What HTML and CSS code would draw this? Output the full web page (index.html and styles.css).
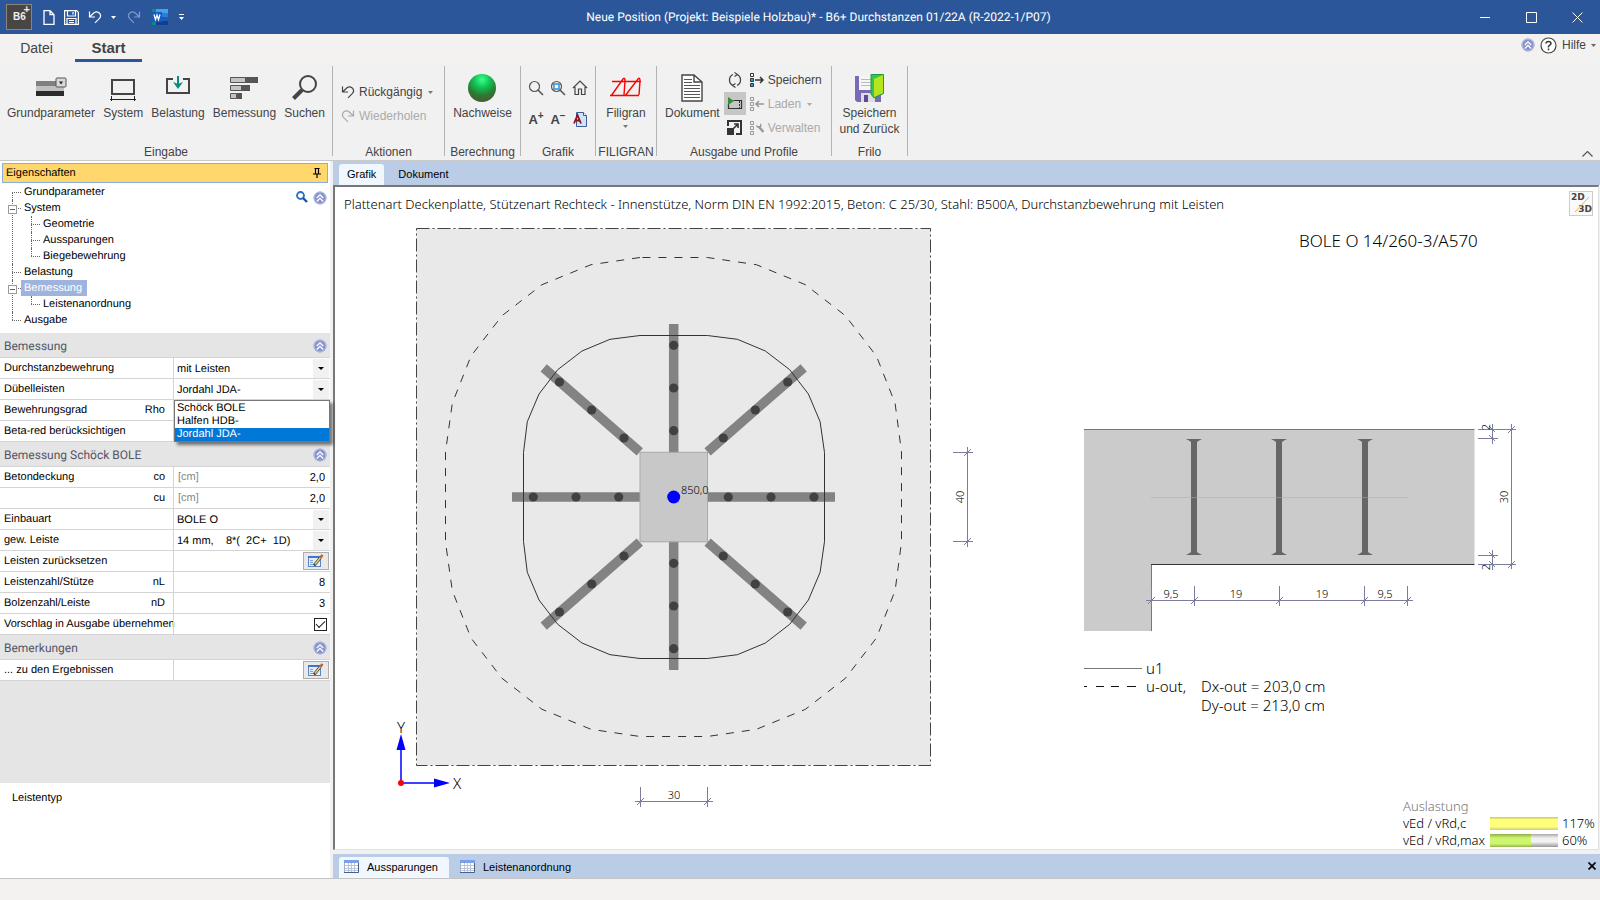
FILE: index.html
```html
<!DOCTYPE html>
<html lang="de">
<head>
<meta charset="utf-8">
<title>Neue Position (Projekt: Beispiele Holzbau)* - B6+ Durchstanzen</title>
<link rel="stylesheet" href="styles.css">
</head>
<body>
<svg class="defs" width="0" height="0" aria-hidden="true">
  <defs>
    <radialGradient id="gBall" cx="50%" cy="20%" r="80%">
      <stop offset="0" stop-color="#3dff8e"/><stop offset=".35" stop-color="#12c455"/><stop offset=".7" stop-color="#2c7a33"/><stop offset="1" stop-color="#4c5a30"/>
    </radialGradient>
    <symbol id="undo" viewBox="0 0 14 14"><path d="M1.500 1.500v5.500h5.500M1.500 7L6 2.800q2.500-1.800 5 0 3 2.700.5 5.500L7 12.800" fill="none" stroke="currentColor" stroke-width="1.200"/></symbol>
    <symbol id="redo" viewBox="0 0 14 14"><path d="M12.500 1.500v5.500H7M12.500 7L8 2.800q-2.500-1.800-5 0-3 2.700-.5 5.500L7 12.800" fill="none" stroke="currentColor" stroke-width="1.200"/></symbol>
    <symbol id="fold" viewBox="0 0 14 14"><circle cx="7" cy="7" r="6.500" fill="#8a93cc"/><circle cx="7" cy="7" r="6" fill="none" stroke="#b3c4e6"/><path d="M3.800 7L7 3.800 10.200 7M3.800 10.500L7 7.300l3.200 3.200" fill="none" stroke="#fff" stroke-width="1.300"/></symbol>
    <symbol id="edit" viewBox="0 0 16 14"><rect x=".5" y="2.500" width="12" height="10" fill="#e4eefb" stroke="#5b86c9"/><rect x="0" y="2" width="13" height="2" fill="#3f74cf"/><path d="M2 6.500h3M2 8.500h3M2 10.500h3" stroke="#7f9fd0"/><path d="M6 11.500L12.500 3.500" stroke="#4a4636" stroke-width="2.800"/><path d="M7 10.300L12.500 3.500" stroke="#e6cf7d" stroke-width="1.400"/><path d="M12.500 3.500L14.500 1" stroke="#b2603a" stroke-width="2.500"/></symbol>
    <symbol id="sheet" viewBox="0 0 15 13"><rect x=".5" y=".5" width="14" height="12" fill="#fff" stroke="#9fb1cd"/><rect x="0" y="0" width="15" height="3" fill="#7ba0e8"/><path d="M1 5.500h13M1 8.500h13M1 10.500h13M4.500 3v10M7.500 3v10M10.500 3v10" stroke="#b9c6da"/><path d="M14.500 3v9.500H0" stroke="#4a5f88" fill="none"/></symbol>
  </defs>
</svg>

<header class="titlebar">
  <div class="quick">
    <span class="logo">B6<sup>+</sup></span>
    <button class="qbtn" aria-label="Neu"><svg width="12" height="15" viewBox="0 0 12 15"><path d="M1 .7h6l4 4v9.600H1zM7 .7v4h4" fill="none" stroke="#fff" stroke-width="1.300"/></svg></button>
    <button class="qbtn" aria-label="Speichern"><svg width="15" height="15" viewBox="0 0 15 15"><path d="M.6.6h12l1.800 1.800v12H.6zM3.500 1v5h8V1M3 14V8.500h9V14M9 2v2.500M5 10.500h5M5 12.500h5" fill="none" stroke="#fff" stroke-width="1.200"/></svg></button>
    <button class="qbtn" aria-label="Rückgängig"><svg width="14" height="14"><use href="#undo"/></svg></button>
    <button class="qbtn" aria-label="Liste"><svg width="5" height="3"><path d="M0 0h5L2.500 3z" fill="#fff"/></svg></button>
    <button class="qbtn dim-icon" aria-label="Wiederholen"><svg width="14" height="14"><use href="#redo"/></svg></button>
    <button class="qbtn" aria-label="Word"><svg width="16" height="16" viewBox="0 0 16 16"><rect x="4" y="0" width="12" height="4" fill="#41a5ee"/><rect x="4" y="4" width="12" height="4" fill="#2b7cd3"/><rect x="4" y="8" width="12" height="4" fill="#185abd"/><rect x="4" y="12" width="12" height="4" fill="#103f91"/><path d="M0 0h4v4H0zM0 12h4v4H0z" fill="#0b8a82"/><rect x="0" y="3" width="10" height="10" fill="#185abd"/><path d="M2 5.500l1.500 5L5 6l1.500 4.500 1.500-5" fill="none" stroke="#fff" stroke-width="1.300"/></svg></button>
    <button class="qbtn" aria-label="Anpassen"><svg width="5" height="7"><path d="M0 .5h5" stroke="#fff"/><path d="M0 3h5L2.500 6z" fill="#fff"/></svg></button>
  </div>
  <h1 class="title">Neue Position (Projekt: Beispiele Holzbau)* - B6+ Durchstanzen 01/22A (R-2022-1/P07)</h1>
  <div class="window-buttons">
    <button aria-label="Minimieren"><svg width="11" height="11"><path d="M0 5.500h10" stroke="#fff"/></svg></button>
    <button aria-label="Maximieren"><svg width="11" height="11"><path d="M.5.5h10v10H.5z" fill="none" stroke="#fff"/></svg></button>
    <button aria-label="Schließen"><svg width="11" height="11"><path d="M.5.5l10 10M10.500.5l-10 10" stroke="#fff"/></svg></button>
  </div>
</header>

<nav class="menu">
  <a href="#" class="menu-tab">Datei</a>
  <a href="#" class="menu-tab current">Start</a>
  <div class="help">
    <svg width="14" height="14"><use href="#fold"/></svg>
    <svg width="17" height="17"><circle cx="8.500" cy="8.500" r="7.500" fill="#fff" stroke="#444" stroke-width="1.200"/><path d="M6 6.500Q6.200 4.500 8.500 4.500T11 6.500Q11 7.500 9.500 8.400T8.500 10.500M8.500 11.500v1.700" fill="none" stroke="#333" stroke-width="1.500"/></svg>
    <button class="plain">Hilfe</button>
    <svg width="5" height="3"><path d="M0 0h5L2.500 3z" fill="#666"/></svg>
  </div>
</nav>

<section class="ribbon">
  <div class="group g-input">
    <div class="tools">
      <button class="tool"><svg width="31" height="28" viewBox="0 0 31 28"><rect y="7" width="28" height="5" fill="#808080"/><rect y="12" width="28" height="5" fill="#c0c0c0"/><rect y="17" width="28" height="5" fill="#2b2b2b"/><rect x="20" y="4" width="10" height="9" rx="1" fill="#d8d8d8" stroke="#555"/><path d="M23 7.500h4l-2 3z" fill="#222"/></svg>Grundparameter</button>
      <button class="tool"><svg width="26" height="28" viewBox="0 0 26 28"><rect x="2" y="6" width="22" height="14" fill="none" stroke="#444" stroke-width="2"/><path d="M0 25.500h26M1.500 22v5M24.500 22v5" stroke="#222"/></svg>System</button>
      <button class="tool"><svg width="26" height="28" viewBox="0 0 26 28"><path d="M8 5H2v14h22V5h-6" fill="none" stroke="#444" stroke-width="2"/><path d="M13 2v10" stroke="#0b8a82" stroke-width="2"/><path d="M8 8l5 2 5-2-5 7z" fill="#0b8a82"/></svg>Belastung</button>
      <button class="tool"><svg width="29" height="28" viewBox="0 0 29 28"><path d="M15 3h13v6H15zM11 11h9v6h-9zM7 19h5v6H7z" fill="#555"/><path d="M.5 3.500h15v5h-15zM.5 11.500h11v5h-11zM.5 19.500h6v5h-6z" fill="#c4c4c4" stroke="#555"/></svg>Bemessung</button>
      <button class="tool"><svg width="28" height="28" viewBox="0 0 28 28"><circle cx="17" cy="10" r="8" fill="none" stroke="#444" stroke-width="2"/><path d="M11 16L2.500 24.500" stroke="#444" stroke-width="4"/></svg>Suchen</button>
    </div>
    <h2>Eingabe</h2>
  </div>
  <div class="group g-actions">
    <div class="rows">
      <button class="row-tool"><svg width="14" height="14"><use href="#undo"/></svg>Rückgängig<svg class="caret" width="5" height="3"><path d="M0 0h5L2.500 3z" fill="#777"/></svg></button>
      <button class="row-tool off" disabled><svg width="14" height="14"><use href="#redo"/></svg>Wiederholen</button>
    </div>
    <h2>Aktionen</h2>
  </div>
  <div class="group g-calc">
    <div class="tools single">
      <button class="tool"><svg width="28" height="28"><circle cx="14" cy="14" r="14" fill="url(#gBall)"/></svg>Nachweise</button>
    </div>
    <h2>Berechnung</h2>
  </div>
  <div class="group g-graphic">
    <div class="icon-grid">
      <button aria-label="Zoom"><svg width="16" height="16"><circle cx="6.500" cy="6.500" r="5" fill="none" stroke="#555" stroke-width="1.200"/><path d="M10 10l5 5" stroke="#555" stroke-width="1.600"/></svg></button>
      <button aria-label="Zoom Fenster"><svg width="16" height="16"><circle cx="6.500" cy="6.500" r="5" fill="none" stroke="#555" stroke-width="1.200"/><rect x="4" y="4" width="5" height="5" fill="#fff" stroke="#2f8fd6" stroke-width="1.500"/><path d="M10 10l5 5" stroke="#555" stroke-width="1.600"/></svg></button>
      <button aria-label="Alles zeigen"><svg width="16" height="16"><path d="M1 8l7-7 7 7M3 7v7.500h3.500V9h3v5.500H13V7" fill="none" stroke="#444" stroke-width="1.200"/></svg></button>
      <button class="glyph">A<sup>+</sup></button>
      <button class="glyph">A<sup>−</sup></button>
      <button class="glyph" aria-label="Schrift"><svg width="15" height="16"><path d="M3.500.5h7l3 3v11h-10z" fill="#d3e2f7" stroke="#3d5e96"/><path d="M10.500.5v3h3" fill="#fff" stroke="#3d5e96"/><path d="M1 11.500L4.500 3 8 11.500M2.500 8.500h4" fill="none" stroke="#8d1420" stroke-width="1.800"/></svg></button>
    </div>
    <h2>Grafik</h2>
  </div>
  <div class="group g-filigran">
    <div class="tools single">
      <button class="tool"><svg width="34" height="28" viewBox="0 0 34 28"><path d="M3 7.500h29M1 21.500h29M2 22L14 5q2-2 2 2l-1 14M16 22L29 5q2-2 2 2l-1 14" fill="none" stroke="#f00" stroke-width="1.400"/></svg>Filigran<svg class="below" width="5" height="3"><path d="M0 0h5L2.500 3z" fill="#777"/></svg></button>
    </div>
    <h2>FILIGRAN</h2>
  </div>
  <div class="group g-output">
    <div class="output">
      <button class="tool"><svg width="22" height="28" viewBox="0 0 22 28"><path d="M1 1h12l8 7v19H1z" fill="#fff" stroke="#444" stroke-width="1.400"/><path d="M13 1v7h8" fill="none" stroke="#444" stroke-width="1.400"/><path d="M3 5.500h8M3 8.500h8M3 11.500h16M3 14.500h16M3 17.500h16M3 20.500h16M3 23.500h16" stroke="#555"/></svg>Dokument</button>
      <div class="stack">
        <button aria-label="Aktualisieren"><svg width="14" height="16" viewBox="0 0 14 16"><path d="M5 2.500Q1.500 4 1.500 8t3.500 5.500M9 13.500q3.500-1.500 3.500-5.500T9 2.500" fill="none" stroke="#444" stroke-width="1.300"/><path d="M6.500.5l3 2-3 2M7.500 11.500l-3 2 3 2" fill="none" stroke="#444" stroke-width="1.200"/></svg></button>
        <button class="pressed" aria-label="Vorschau"><svg width="16" height="14" viewBox="0 0 16 14"><path d="M6.500 3.500h8v8h-13V7" fill="none" stroke="#333" stroke-width="1.200"/><path d="M12.500 4v7" stroke="#333" stroke-dasharray="2 1"/><path d="M1 0l6 4-6 4z" fill="#2f8f3b"/></svg></button>
        <button aria-label="Vollbild"><svg width="15" height="15"><path d="M1 6V1h13v13H9" fill="none" stroke="#333" stroke-width="2"/><rect y="8" width="7" height="7" fill="#333"/><path d="M6 9l5-5M7 4h4v4" fill="none" stroke="#333" stroke-width="1.600"/></svg></button>
      </div>
      <div class="rows">
        <button class="row-tool"><svg width="14" height="14" viewBox="0 0 14 14"><path d="M.5.5h3v3h-3z" fill="#fff" stroke="#333"/><path d="M.5 5.500h3v3h-3zM.5 10.500h3v3h-3z" fill="#3aa0dc" stroke="#333"/><path d="M5 7h8M10 4l3 3-3 3" fill="none" stroke="#333" stroke-width="1.500"/></svg>Speichern</button>
        <button class="row-tool off" disabled><svg width="14" height="14" viewBox="0 0 14 14"><path d="M.5.5h3v3h-3zM.5 5.500h3v3h-3zM.5 10.500h3v3h-3z" fill="none" stroke="#999"/><path d="M6 7h8M9 4L6 7l3 3" fill="none" stroke="#999" stroke-width="1.500"/></svg>Laden<svg class="caret" width="5" height="3"><path d="M0 0h5L2.500 3z" fill="#aaa"/></svg></button>
        <button class="row-tool off" disabled><svg width="14" height="14" viewBox="0 0 14 14"><path d="M.5.5h3v3h-3zM.5 5.500h3v3h-3zM.5 10.500h3v3h-3z" fill="none" stroke="#999"/><path d="M9 6l4.500 5" stroke="#999" stroke-width="2.500"/><path d="M6 4q0 3 3 3t2.500-3L10 2v3H8z" fill="#999"/></svg>Verwalten</button>
      </div>
    </div>
    <h2>Ausgabe und Profile</h2>
  </div>
  <div class="group g-frilo">
    <div class="tools single">
      <button class="tool"><svg width="29" height="28" viewBox="0 0 29 28"><path d="M0 2h26v26H2l-2-2z" fill="#7a68b8"/><rect x="4" y="2" width="17" height="14" fill="#f6f6f6"/><path d="M6 5.500h10M6 8.500h10M6 11.500h10" stroke="#bbb"/><rect x="6" y="19" width="14" height="9" fill="#ddd"/><rect x="9" y="21" width="4" height="7" fill="#5a4a95"/><path d="M16 .5h12.500v19L19 24l-3-4z" fill="#39c24d" stroke="#1f9e38"/><path d="M19 5l9-4v18l-9 4z" fill="#b5e61d"/></svg><span>Speichern<br>und Zurück</span></button>
    </div>
    <h2>Frilo</h2>
  </div>
  <button class="collapse" aria-label="Menüband reduzieren"><svg width="11" height="6"><path d="M.5 5.500l5-5 5 5" fill="none" stroke="#555" stroke-width="1.200"/></svg></button>
</section>

<main class="work">
  <aside class="side">
    <div class="side-title">Eigenschaften
      <svg width="8" height="10"><path d="M1.500.5h5M2.500 0v6M5.500 0v6M0 6h8M4 6v4" fill="none" stroke="#000" stroke-width="1.200"/></svg>
    </div>
    <div class="tree-box">
      <ul class="tree">
        <li><span>Grundparameter</span></li>
        <li><i></i><span>System</span>
          <ul>
            <li><span>Geometrie</span></li>
            <li><span>Aussparungen</span></li>
            <li><span>Biegebewehrung</span></li>
          </ul>
        </li>
        <li><span>Belastung</span></li>
        <li><i></i><span class="selected">Bemessung</span>
          <ul><li><span>Leistenanordnung</span></li></ul>
        </li>
        <li><span>Ausgabe</span></li>
      </ul>
      <div class="tree-tools">
        <svg width="12" height="12"><circle cx="4.500" cy="4.500" r="3.500" fill="#fff" stroke="#2a6fc0" stroke-width="1.800"/><path d="M7 7l4 4" stroke="#24509a" stroke-width="2.400"/></svg>
        <svg width="14" height="14"><use href="#fold"/></svg>
      </div>
    </div>

    <h3 class="section">Bemessung<svg width="14" height="14"><use href="#fold"/></svg></h3>
    <div class="prop"><label for="p1">Durchstanzbewehrung</label><div class="value combo"><select id="p1"><option>mit Leisten</option></select></div></div>
    <div class="prop"><label for="p2">Dübelleisten</label><div class="value combo"><select id="p2"><option>Jordahl JDA-</option></select>
      <ul class="popup" role="listbox"><li role="option">Schöck BOLE</li><li role="option">Halfen HDB-</li><li role="option" aria-selected="true" class="picked">Jordahl JDA-</li></ul></div></div>
    <div class="prop"><label for="p3">Bewehrungsgrad<span>Rho</span></label><div class="value"><input id="p3" type="text"></div></div>
    <div class="prop"><label for="p4">Beta-red berücksichtigen</label><div class="value"><input id="p4" type="text"></div></div>

    <h3 class="section">Bemessung Schöck BOLE<svg width="14" height="14"><use href="#fold"/></svg></h3>
    <div class="prop"><label for="p5">Betondeckung<span>co</span></label><div class="value"><em>[cm]</em><input id="p5" type="text" value="2,0"></div></div>
    <div class="prop"><label for="p6"><span>cu</span></label><div class="value"><em>[cm]</em><input id="p6" type="text" value="2,0"></div></div>
    <div class="prop"><label for="p7">Einbauart</label><div class="value combo"><select id="p7"><option>BOLE O</option></select></div></div>
    <div class="prop"><label for="p8">gew. Leiste</label><div class="value combo"><select id="p8"><option>14 mm,&nbsp;&nbsp;&nbsp; 8*(&nbsp; 2C+&nbsp; 1D)</option></select></div></div>
    <div class="prop"><label for="p9">Leisten zurücksetzen</label><div class="value"><button id="p9" class="edit"><svg width="16" height="14"><use href="#edit"/></svg></button></div></div>
    <div class="prop"><label for="p10">Leistenzahl/Stütze<span>nL</span></label><div class="value"><input id="p10" type="text" value="8"></div></div>
    <div class="prop"><label for="p11">Bolzenzahl/Leiste<span>nD</span></label><div class="value"><input id="p11" type="text" value="3"></div></div>
    <div class="prop"><label for="p12">Vorschlag in Ausgabe übernehmen</label><div class="value"><input id="p12" type="checkbox" checked></div></div>

    <h3 class="section">Bemerkungen<svg width="14" height="14"><use href="#fold"/></svg></h3>
    <div class="prop"><label for="p13">... zu den Ergebnissen</label><div class="value"><button id="p13" class="edit"><svg width="16" height="14"><use href="#edit"/></svg></button></div></div>
    <div class="filler"></div>
    <p class="hint">Leistentyp</p>
  </aside>

  <section class="main">
    <nav class="tabs top">
      <a href="#" class="tab on">Grafik</a>
      <a href="#" class="tab">Dokument</a>
    </nav>
    <div class="canvas">
      <svg class="drawing" width="100%" height="100%">
        <g transform="translate(-335 -187)">
          <rect x="416.500" y="228.500" width="514" height="537" fill="#e9e9e9" stroke="#444" stroke-dasharray="13 3 2 3"/>
          <path d="M673.700 324v346M512 497h323M803.700 367.800L707.600 451.800M543.700 367.800L639.800 451.800M803.700 626.200L707.600 542.200M543.700 626.200L639.800 542.200" stroke="#838383" stroke-width="9.500"/>
          <rect x="640" y="452.300" width="67.500" height="89.500" fill="#c8c8c8" stroke="#a9a9a9"/>
          <g fill="#414141">
            <circle cx="673.700" cy="345.300" r="4.600"/><circle cx="673.700" cy="388" r="4.600"/><circle cx="673.700" cy="430.700" r="4.600"/>
            <circle cx="673.700" cy="563.300" r="4.600"/><circle cx="673.700" cy="606" r="4.600"/><circle cx="673.700" cy="648.700" r="4.600"/>
            <circle cx="533.300" cy="497" r="4.600"/><circle cx="576" cy="497" r="4.600"/><circle cx="618.700" cy="497" r="4.600"/>
            <circle cx="728.300" cy="497" r="4.600"/><circle cx="771" cy="497" r="4.600"/><circle cx="814" cy="497" r="4.600"/>
            <circle cx="723.300" cy="438" r="4.600"/><circle cx="755.300" cy="410" r="4.600"/><circle cx="787.700" cy="382" r="4.600"/>
            <circle cx="624" cy="438" r="4.600"/><circle cx="591.700" cy="410" r="4.600"/><circle cx="559.500" cy="382" r="4.600"/>
            <circle cx="723.300" cy="556" r="4.600"/><circle cx="755.300" cy="584" r="4.600"/><circle cx="787.700" cy="612" r="4.600"/>
            <circle cx="624" cy="556" r="4.600"/><circle cx="591.700" cy="584" r="4.600"/><circle cx="559.500" cy="612" r="4.600"/>
          </g>
          <polygon fill="none" stroke="#333" points="640,335.500 610,339.300 582,351 557.700,369.700 539,394 527.300,421.700 523.500,452.500 523.500,541.500 527.300,572.300 539,600 557.700,624.300 582,643 610,654.700 640,658.500 707.400,658.500 737.400,654.700 765.400,643 789.700,624.300 808.400,600 820.100,572.300 824.500,541.500 824.500,452.500 820.100,421.700 808.400,394 789.700,369.700 765.400,351 737.400,339.300 707.400,335.500"/>
          <polygon fill="none" stroke="#333" stroke-dasharray="8 8" points="640,257.500 591,264.700 542,284.700 502,315.700 471,356 452.300,403.300 445.500,452 445.500,542 452.300,590.700 471,638 502,678.300 542,709.300 591,729.300 640,736.500 707.400,736.500 756.400,729.300 805.400,709.300 845.400,678.300 876.400,638 895.100,590.700 901.500,542 901.500,452 895.100,403.300 876.400,356 845.400,315.700 805.400,284.700 756.400,264.700 707.400,257.500"/>
          <circle cx="673.700" cy="497" r="6.500" fill="#00f"/>
          <text class="t-dim" x="681" y="494">850,0</text>

          <g class="dim">
            <path d="M953 452.500h20M953 541.500h20M967.500 447v100M964 456l7-7M964 545l7-7"/>
            <path d="M640.500 787v20M707.500 787v20M635 801.500h78M637 805l7-7M704 805l7-7"/>
          </g>
          <text class="t-dim mid" transform="translate(964 497) rotate(-90)">40</text>
          <text class="t-dim mid" x="674" y="799">30</text>

          <path d="M401 783V748M401 783h34" stroke="#00f" stroke-width="1.500"/>
          <path d="M401 734l4.500 16h-9zM450 783l-16-4.500v9z" fill="#00f"/>
          <circle cx="401" cy="783" r="3" fill="#f00"/>
          <text class="t-leg mid" x="401" y="733">Y</text>
          <text class="t-leg mid" x="457" y="789">X</text>

          <text class="t-big" x="1299" y="247">BOLE O 14/260-3/A570</text>
          <path d="M1084 429.500h390.500v135h-323V631H1084z" fill="#cbcbcb"/>
          <path d="M1084 429.500h390.500M1151.500 565v66" stroke="#777"/>
          <path d="M1151 564.500h323.500" stroke="#333"/>
          <g fill="#666">
            <path id="stud" d="M1186 439h16q-4 2-5 3v110q1 1 5 3h-16q4-2 5-3V442q-1-1-5-3z"/>
            <use href="#stud" x="85"/><use href="#stud" x="171"/>
          </g>
          <path d="M1151 497.500h257" stroke="#aaa" stroke-opacity=".5"/>
          <g class="dim">
            <path d="M1146 600.500h267M1151.500 586v20M1194.500 586v20M1279.500 586v20M1364.500 586v20M1407.500 586v20M1148 604l7-7M1191 604l7-7M1276 604l7-7M1361 604l7-7M1404 604l7-7"/>
            <path d="M1478 429.500h38M1478 438.500h20M1478 555.500h20M1478 564.500h38M1492.500 424v20M1492.500 550v20M1511.500 424v145M1489 426l6 6M1489 435l6 6M1489 552l6 6M1489 561l6 6M1508 433l7-7M1508 568l7-7"/>
          </g>
          <text class="t-dim mid" x="1171" y="598">9,5</text>
          <text class="t-dim mid" x="1236" y="598">19</text>
          <text class="t-dim mid" x="1322" y="598">19</text>
          <text class="t-dim mid" x="1385" y="598">9,5</text>
          <text class="t-dim mid" transform="translate(1490 427) rotate(-90)">2</text>
          <text class="t-dim mid" transform="translate(1490 567) rotate(-90)">2</text>
          <text class="t-dim mid" transform="translate(1508 497) rotate(-90)">30</text>

          <path d="M1084 668.500h58" stroke="#777"/>
          <path d="M1084 686.500h3M1096 686.500h8M1111 686.500h8M1127 686.500h9" stroke="#111"/>
          <text class="t-leg" x="1146" y="674">u1</text>
          <text class="t-leg" x="1146" y="692">u-out,</text>
          <text class="t-leg" x="1201" y="692">Dx-out = 203,0 cm</text>
          <text class="t-leg" x="1201" y="711">Dy-out = 213,0 cm</text>
        </g>
      </svg>
      <p class="caption">Plattenart Deckenplatte, Stützenart Rechteck - Innenstütze, Norm DIN EN 1992:2015, Beton: C 25/30, Stahl: B500A, Durchstanzbewehrung mit Leisten</p>
      <button class="view-mode"><span>2D</span><svg width="18" height="18"><path d="M2 17L16 2" stroke="#f2b04a"/></svg><span>3D</span></button>
      <div class="usage">
        <span class="usage-title">Auslastung</span>
        <span>vEd / vRd,c</span><div class="bar"><div class="fill yellow" style="width:100%"></div></div><span>117%</span>
        <span>vEd / vRd,max</span><div class="bar"><div class="fill green" style="width:60%"></div></div><span>60%</span>
      </div>
    </div>
    <nav class="tabs bottom">
      <a href="#" class="tab on"><svg width="15" height="13"><use href="#sheet"/></svg>Aussparungen</a>
      <a href="#" class="tab"><svg width="15" height="13"><use href="#sheet"/></svg>Leistenanordnung</a>
      <button class="close" aria-label="Schließen"><svg width="8" height="8"><path d="M.5.5l7 7M7.500.5l-7 7" stroke="#000" stroke-width="1.700"/></svg></button>
    </nav>
  </section>
</main>
<footer class="status"></footer>
</body>
</html>
```
FILE: styles.css
```css
* { box-sizing: border-box; }
html, body { height: 100%; }
body {
  margin: 0;
  display: flex;
  flex-direction: column;
  background: #f1f1f1;
  font: 12px/16px "Liberation Sans", Arial, sans-serif;
  color: #444;
  overflow: hidden;
}
svg { flex: none; display: block; }
.defs { position: absolute; }
button { border: 0; padding: 0; background: none; font: inherit; color: inherit; }
a { color: inherit; text-decoration: none; }
h1, h2, h3, p, ul { margin: 0; padding: 0; font-weight: normal; }
ul { list-style: none; }

/* title bar */
.titlebar {
  display: grid;
  grid-template-columns: 1fr auto 1fr;
  align-items: center;
  height: 34px;
  flex: none;
  background: #2b579a;
  color: #fff;
}
.quick { display: flex; align-items: center; gap: 11px; padding-left: 6px; }
.logo {
  position: relative;
  width: 26px;
  height: 26px;
  padding-left: 6px;
  border: 1px solid #8a857a;
  background: #484644;
  color: #eee;
  font: bold 10px/24px "Liberation Sans", sans-serif;
}
.logo sup { position: absolute; right: 1px; top: 1px; font-size: 11px; line-height: 6px; }
.qbtn { display: flex; }
.qbtn:nth-child(2), .qbtn:nth-child(3), .qbtn:nth-child(4) { margin-right: -2px; }
.dim-icon { color: #7f9cc8; }
.title { font: 12px/16px Roboto, "Open Sans", sans-serif; padding-left: 37px; text-rendering: geometricPrecision; }
.window-buttons { display: flex; justify-content: flex-end; }
.window-buttons button { width: 46px; height: 34px; display: grid; place-items: center; }

/* menu tabs */
.menu { display: flex; flex: none; height: 28px; background: #f3f2f1; }
.menu-tab { width: 75px; padding-right: 2px; text-align: center; font-size: 14px; line-height: 28px; }
.menu-tab.current { width: 67px; padding: 0; font-size: 15px; font-weight: bold; border-bottom: 3px solid #2b579a; }
.help { margin-left: auto; padding: 0 4px 6px 0; display: flex; align-items: center; gap: 5px; }

/* ribbon */
.ribbon {
  display: flex;
  flex: none;
  height: 99px;
  padding: 4px 0;
  background: #f1f1f1;
  border-bottom: 1px solid #c8c8c8;
  position: relative;
}
.group { display: flex; flex-direction: column; justify-content: space-between; border-right: 1px solid #b4b4b4; flex: none; }
.group h2 { height: 12px; font-size: 12px; line-height: 16px; text-align: center; white-space: nowrap; }
.g-input { width: 333px; }
.g-actions { width: 112px; }
.g-calc { width: 76px; }
.g-graphic { width: 75px; }
.g-filigran { width: 61px; }
.g-output { width: 175px; }
.g-frilo { width: 76px; }
.tools { display: flex; justify-content: space-between; padding: 8px 7px 0 7px; }
.tools.single { justify-content: center; padding: 8px 0 0; }
.tool { display: flex; flex-direction: column; align-items: center; line-height: 16px; white-space: nowrap; }
.tool > svg:first-child { margin-bottom: 3px; }
.tool .below { margin-top: 4px; }
.rows { display: flex; flex-direction: column; gap: 8px; padding: 18px 0 0 8px; }
.row-tool { display: flex; align-items: center; gap: 4px; height: 16px; line-height: 16px; white-space: nowrap; }
.row-tool .caret { margin-left: 2px; }
.row-tool.off { color: #aaa; }
.icon-grid { display: grid; grid-template-columns: repeat(3, 22px); grid-auto-rows: 32px; place-content: start center; padding-top: 6px; }
.icon-grid button { display: grid; place-items: center; }
.icon-grid .glyph { display: flex; align-items: center; justify-content: center; font-weight: bold; font-size: 13px; }
.glyph sup { font-size: 10px; line-height: 0; margin-bottom: 8px; }
.output { display: flex; }
.output .tool { padding: 8px 4px 0 8px; }
.output .rows { padding: 6px 0 0 4px; }
.stack { display: flex; flex-direction: column; gap: 1px; padding-top: 2px; }
.stack button { width: 22px; height: 23px; display: grid; place-items: center; }
.stack .pressed { background: #c8c6c4; }
.collapse { position: absolute; right: 7px; bottom: 3px; }

/* work area */
.work { flex: 1; display: flex; gap: 3px; min-height: 0; }
.side {
  width: 330px;
  flex: none;
  display: flex;
  flex-direction: column;
  background: #fff;
  color: #000;
  font-size: 11px;
  text-rendering: geometricPrecision;
}
.side-title {
  display: flex;
  justify-content: space-between;
  align-items: center;
  height: 20px;
  margin: 2px 2px 0;
  padding: 0 6px 0 3px;
  border: 1px solid #8aaede;
  background: #ffd76c;
  flex: none;
}
.tree-box { flex: none; height: 150px; padding-top: 1px; display: flex; justify-content: space-between; }
.tree { padding-left: 12px; }
.tree li { position: relative; padding-left: 12px; line-height: 16px; }
.tree li::before { content: ""; position: absolute; left: 0; top: 0; bottom: 0; border-left: 1px dotted #666; }
.tree li::after { content: ""; position: absolute; left: 0; top: 8px; width: 9px; border-top: 1px dotted #666; }
.tree > li:first-child::before { top: 8px; }
.tree li:last-child::before { bottom: auto; height: 8px; }
.tree ul { margin-left: 7px; }
.tree i { position: absolute; left: -4px; top: 5px; width: 9px; height: 9px; border: 1px solid #999; background: #fff; z-index: 1; }
.tree i::after { content: ""; display: block; margin: 3px 1px; border-top: 1px solid #36c; }
.selected { display: inline-block; background: #9fb4dd; color: #fff; margin-left: -3px; padding: 0 5px 0 3px; }
.tree-tools { display: flex; align-items: flex-start; gap: 5px; padding: 7px 3px 0 0; }
.section {
  flex: none;
  display: flex;
  align-items: center;
  justify-content: space-between;
  height: 25px;
  padding: 2px 3px 0 4px;
  background: #e5e5e5;
  color: #556;
  border-bottom: 1px solid #d4d4d4;
  font: 12px/16px Roboto, sans-serif;
}
.prop { flex: none; display: flex; height: 21px; border-bottom: 1px solid #d4d4d4; }
.prop label { width: 173px; flex: none; padding: 0 8px 0 4px; display: flex; justify-content: space-between; line-height: 20px; white-space: nowrap; }
.prop label span { margin-left: auto; }
.value { flex: 1; min-width: 0; border-left: 1px solid #d4d4d4; display: flex; align-items: center; position: relative; }
.value em { font-style: normal; color: #888; padding-left: 4px; }
.value input[type="text"] { flex: 1; min-width: 0; width: 100%; border: 0; padding: 0 5px; text-align: right; font: inherit; color: #000; background: none; outline: 0; }
.value input[type="checkbox"] {
  appearance: none;
  margin: 0 3px 0 auto;
  width: 13px;
  height: 13px;
  border: 1px solid #222;
  display: grid;
  place-items: center;
}
.value input[type="checkbox"]::before { content: ""; width: 8px; height: 4px; border: solid #222; border-width: 0 0 1px 1px; transform: rotate(-45deg) translate(1px, -1px); }
.combo select { appearance: none; flex: 1; height: 20px; border: 0; padding: 1px 0 0 3px; background: #fff; font: inherit; color: #000; text-rendering: inherit; }
.combo::after { content: ""; position: absolute; right: 1px; top: 1px; width: 16px; height: 19px; background: #f1f1f1; }
.combo::before { content: ""; position: absolute; z-index: 1; right: 6px; top: 9px; border: 3px solid transparent; border-top-color: #000; border-bottom: 0; }
.popup {
  position: absolute;
  z-index: 3;
  left: 0;
  top: 21px;
  width: 156px;
  padding-top: 1px;
  border: 1px solid #777;
  background: #fff;
  box-shadow: 3px 3px 3px rgba(0, 0, 0, .5);
  line-height: 13px;
}
.popup li { padding-left: 2px; }
.popup .picked { background: #0078d7; color: #fff; }
.edit { margin: 0 1px 0 auto; width: 26px; height: 18px; border: 1px solid #adadad; background: #e9e9e9; display: grid; place-items: center; }
.filler { flex: 1; background: #e5e5e5; }
.hint { flex: none; height: 95px; padding: 7px 12px; }

/* main area */
.main { flex: 1; min-width: 0; display: flex; flex-direction: column; color: #000; font-size: 11px; }
.tabs { display: flex; align-items: flex-end; flex: none; height: 24px; padding-left: 6px; background: #bbcde6; gap: 6px; }
.tabs.bottom { margin-top: 4px; }
.tab { display: flex; align-items: center; gap: 8px; height: 21px; padding: 0 8px 2px; border-radius: 3px 3px 0 0; }
.tabs.bottom .tab { padding: 0 11px 2px 5px; }
.tab.on { background: #f1f7fe; }
.close { margin-left: auto; align-self: center; padding-right: 4px; }
.canvas {
  flex: 1;
  min-height: 0;
  position: relative;
  margin-right: 1px;
  background: #fff;
  border: solid #777;
  border-width: 2px 1px 1px 2px;
  border-right-color: #e0e0e0;
  border-bottom-color: #e0e0e0;
  font-family: "Noto Sans", "Open Sans", sans-serif;
  font-weight: 300;
}
.drawing { position: absolute; inset: 0; }
.dim path { fill: none; stroke: #7c7c9c; stroke-width: 1; }
.drawing text { fill: #000; }
.t-dim { font-size: 11px; }
.t-leg { font-size: 15px; }
.t-big { font-size: 17px; }
.mid { text-anchor: middle; }
.caption { position: absolute; left: 9px; top: 8px; font-size: 13px; line-height: 18px; font-weight: 300; }
.view-mode {
  position: absolute;
  right: 5px;
  top: 4px;
  width: 24px;
  height: 25px;
  border: 1px solid #ccc;
  background: #fafafa;
  display: grid;
  font: bold 9px/10px "DejaVu Sans", sans-serif;
  color: #444;
}
.view-mode span:first-child { text-align: left; padding-left: 1px; }
.view-mode span:last-child { text-align: right; }
.view-mode svg { position: absolute; left: 3px; top: 3px; }
.usage {
  position: absolute;
  right: 1px;
  bottom: 0;
  display: grid;
  grid-template-columns: 83px 68px 35px;
  column-gap: 4px;
  align-items: center;
  font-size: 13px;
  line-height: 17px;
  white-space: nowrap;
}
.usage-title { grid-column: 1 / -1; color: #777; }
.bar { height: 13px; background: linear-gradient(#aaa, #eee 30%, #f4f4f4 60%, #bbb 85%, #999); }
.fill { height: 100%; }
.yellow { background: linear-gradient(#c8c464, #ffff78 20%, #ffff80 75%, #d0cc70); }
.green { background: linear-gradient(#8fae48, #cdf56e 30%, #cdf56e 75%, #94b44e); }
.status { flex: none; height: 22px; background: #f3f2f1; border-top: 1px solid #c4c4c4; }
```
